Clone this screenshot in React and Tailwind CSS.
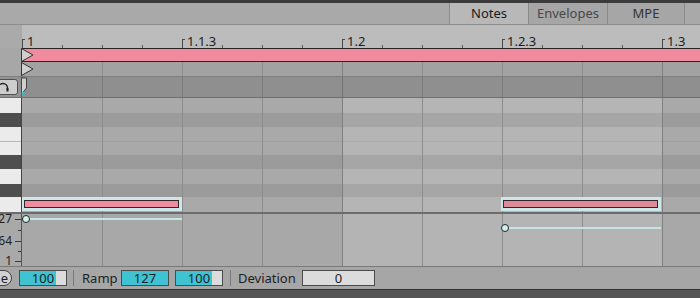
import React from "react";

const COLS = [0, 1, 2, 3, 4, 5, 6, 7, 8];
const isB = (i) => i >= 4 && i <= 7;
const colW = (i) => (i === 8 ? "flex-1" : "w-[80px] shrink-0");

const KEYS = [
  { t: "w", h: "h-[15px]" },
  { t: "b", h: "h-[14px]" },
  { t: "w", h: "h-[14px]" },
  { t: "w2", h: "h-[14px]" },
  { t: "b", h: "h-[14px]" },
  { t: "w", h: "h-[15px]" },
  { t: "b", h: "h-[13px]" },
  { t: "w", h: "h-[15px]" },
];

function lineCls(i, dark) {
  if (i === 0) return "";
  if (dark) return i === 4 || i === 8 ? "border-l border-[#727272]" : "border-l border-[#7c7c7c]";
  return i === 4 || i === 8 ? "border-l border-[#7f7f7f]" : "border-l border-[#8d8d8d]";
}

function cellCls(i, t) {
  const b = isB(i);
  if (t === "b") return b ? "bg-[#a6a6a6]" : "bg-[#9b9b9b]";
  if (t === "w2") return b ? "bg-[#b5b5b5] border-t border-[#acacac]" : "bg-[#a9a9a9] border-t border-[#a0a0a0]";
  return b ? "bg-[#b5b5b5]" : "bg-[#a9a9a9]";
}

function keyCls(t) {
  if (t === "b") return "bg-[#4e4e4e]";
  if (t === "w2") return "bg-[#ebebeb] border-t border-[#b8b8b8]";
  return "bg-[#ebebeb]";
}

const RULER = Array.from({ length: 17 }, (_, k) => k);
const LABELS = { 0: "1", 4: "1.1.3", 8: "1.2", 12: "1.2.3", 16: "1.3" };

function Ruler() {
  return (
    <div className="h-[23px] shrink-0 flex bg-[#bcbcbc]">
      <div className="w-[22px] shrink-0 bg-[#aaaaaa]" />
      <div className="flex-1 flex">
        {RULER.map((k) => (
          <div key={k} className="w-[40px] shrink-0 h-full flex items-end">
            {LABELS[k] !== undefined ? (
              <>
                <div className="w-[3px] h-[9px] border-l border-t border-[#4a4a4a] shrink-0" />
                <span className="ml-[2px] mb-[-1px] text-[13px] leading-[16px] text-[#1e1e1e] whitespace-nowrap">
                  {LABELS[k]}
                </span>
              </>
            ) : (
              <div className="w-[1px] h-[3px] bg-[#5a5a5a]" />
            )}
          </div>
        ))}
      </div>
    </div>
  );
}

function FlatCols({ bgCls, dark }) {
  return (
    <div className={"flex-1 flex " + bgCls}>
      {COLS.map((i) => (
        <div key={i} className={colW(i) + " h-full " + lineCls(i, dark)} />
      ))}
    </div>
  );
}

function Note({ leftCls, innerCls }) {
  return (
    <div className={"absolute top-[99px] w-[160px] h-[14px] bg-[#cbe7e9] pt-[3px] pb-[3px] pl-[2px] pr-[3px] " + leftCls}>
      <div className={"w-full h-full border border-[#3a2228] " + innerCls} />
    </div>
  );
}

function PianoRoll() {
  return (
    <div className="h-[114px] shrink-0 flex">
      <div className="w-[22px] shrink-0 flex flex-col border-r border-[#444444]">
        {KEYS.map((k, r) => (
          <div key={r} className={k.h + " " + keyCls(k.t)} />
        ))}
      </div>
      <div className="flex-1 relative flex">
        {COLS.map((i) => (
          <div key={i} className={colW(i) + " h-full flex flex-col " + lineCls(i, false)}>
            {KEYS.map((k, r) => (
              <div key={r} className={k.h + " " + cellCls(i, k.t)} />
            ))}
          </div>
        ))}
        <Note leftCls="left-[0px]" innerCls="bg-[#f08c9e]" />
        <Note leftCls="left-[479px]" innerCls="bg-[#de8b99]" />
      </div>
    </div>
  );
}

function VelocityLane() {
  return (
    <div className="h-[52px] shrink-0 flex">
      <div className="w-[22px] shrink-0 relative bg-[#a9a9a9] border-r border-[#555555] text-[12px] leading-[14px] text-[#1e1e1e]">
        <div className="absolute right-[9px] top-[-2px] whitespace-nowrap">127</div>
        <div className="absolute right-[9px] top-[20px] whitespace-nowrap">64</div>
        <div className="absolute right-[9px] top-[40px] whitespace-nowrap">1</div>
        <svg className="absolute right-0 top-0" width="7" height="52" viewBox="0 0 7 52">
          <g stroke="#3a3a3a" strokeWidth="1">
            <line x1="1" y1="5.5" x2="7" y2="5.5" />
            <line x1="4" y1="16.5" x2="7" y2="16.5" />
            <line x1="1" y1="27.5" x2="7" y2="27.5" />
            <line x1="4" y1="37.5" x2="7" y2="37.5" />
            <line x1="1" y1="47.5" x2="7" y2="47.5" />
          </g>
        </svg>
      </div>
      <div className="flex-1 relative flex">
        {COLS.map((i) => (
          <div
            key={i}
            className={colW(i) + " h-full " + lineCls(i, false) + " " + (isB(i) ? "bg-[#b4b4b4]" : "bg-[#a8a8a8]")}
          />
        ))}
        <div className="absolute left-[4px] top-[4px] w-[156px] h-[2px] bg-[#c6e4e6]" />
        <div className="absolute left-[0px] top-[1px] w-[8px] h-[8px] rounded-full border-[1.5px] border-[#1c2626] bg-[#d6eff1]" />
        <div className="absolute left-[483px] top-[13px] w-[156px] h-[2px] bg-[#c6e4e6]" />
        <div className="absolute left-[479px] top-[10px] w-[8px] h-[8px] rounded-full border-[1.5px] border-[#1c2626] bg-[#d6eff1]" />
      </div>
    </div>
  );
}

function ValueBox({ widthCls, fillCls, value }) {
  return (
    <div className={"relative h-[16px] border border-[#4b4b4b] bg-[#dcdcdc] flex items-center justify-center shrink-0 " + widthCls}>
      {fillCls ? <div className={"absolute left-0 top-0 bottom-0 bg-[#3fc2d1] " + fillCls} /> : null}
      <span className="relative text-[13px] leading-[14px] text-[#1e1e1e]">{value}</span>
    </div>
  );
}

function BottomBar() {
  return (
    <div className="h-[23px] shrink-0 flex items-center bg-[#a6a6a6] border-t border-[#7a7a7a] text-[13px] text-[#1e1e1e]">
      <div className="ml-[-28px] w-[40px] h-[16px] shrink-0 rounded-full border border-[#444444] bg-[#d2d2d2] flex items-center justify-end pr-[3px] leading-[14px]">
        e
      </div>
      <div className="ml-[7px]">
        <ValueBox widthCls="w-[48px]" fillCls="w-[36px]" value="100" />
      </div>
      <div className="ml-[6px] w-px h-[16px] bg-[#7a7a7a] shrink-0" />
      <div className="ml-[8px] w-[34px] shrink-0 leading-[14px] whitespace-nowrap">Ramp</div>
      <div className="ml-[5px]">
        <ValueBox widthCls="w-[48px]" fillCls="w-[46px]" value="127" />
      </div>
      <div className="ml-[6px]">
        <ValueBox widthCls="w-[48px]" fillCls="w-[36px]" value="100" />
      </div>
      <div className="ml-[7px] w-px h-[16px] bg-[#7a7a7a] shrink-0" />
      <div className="ml-[7px] w-[58px] shrink-0 leading-[14px] whitespace-nowrap">Deviation</div>
      <div className="ml-[6px]">
        <ValueBox widthCls="w-[73px]" fillCls="" value="0" />
      </div>
    </div>
  );
}

export default function App() {
  return (
    <div className="w-[700px] h-[298px] overflow-hidden flex flex-col bg-[#a8a8a8] font-['Noto_Sans',sans-serif] text-[#1e1e1e] select-none">
      <div className="h-[3px] shrink-0 bg-[#3b3b3b]" />
      <div className="h-[22px] shrink-0 flex bg-[#a9a9a9] border-b border-[#8c8c8c] text-[13px]">
        <div className="ml-[449px] flex h-full">
          <div className="w-[79px] h-full flex items-center justify-center bg-[#b8b8b8] border-l border-[#8a8a8a] text-[#1a1a1a]">
            Notes
          </div>
          <div className="w-[79px] h-full flex items-center justify-center bg-[#a6a6a6] border-l border-[#8a8a8a] text-[#474747]">
            Envelopes
          </div>
          <div className="w-[78px] h-full flex items-center justify-center bg-[#a6a6a6] border-l border-r border-[#8a8a8a] text-[#333333]">
            MPE
          </div>
        </div>
      </div>
      <Ruler />
      <div className="relative shrink-0 flex flex-col">
        <div className="h-[14px] flex">
          <div className="w-[22px] shrink-0 bg-[#a7a7a7] border-r border-[#555555]" />
          <div className="flex-1 bg-[#f08b9d] border-t border-b border-[#2d2326]" />
        </div>
        <div className="h-[15px] flex border-b border-[#7e7e7e]">
          <div className="w-[22px] shrink-0 bg-[#a7a7a7] border-r border-[#555555]" />
          <FlatCols bgCls="bg-[#a2a2a2]" dark={false} />
        </div>
        <div className="h-[21px] flex border-b border-[#6f6f6f]">
          <div className="w-[22px] shrink-0 bg-[#939393] border-r border-[#555555] flex items-center">
            <div className="ml-[-5px] w-[23px] h-[16px] rounded-[3px] border border-[#505050] bg-[#cdcdcd] flex items-center pl-[1px]">
              <svg width="12" height="10" viewBox="0 0 12 10" fill="none">
                <path d="M1.5 8.5 V6 A4.5 4.5 0 0 1 10.5 6 V8.5" stroke="#222" strokeWidth="1.4" />
                <rect x="0.5" y="6" width="2" height="3.5" fill="#222" />
                <rect x="9.5" y="6" width="2" height="3.5" fill="#222" />
              </svg>
            </div>
          </div>
          <FlatCols bgCls="bg-[#8f8f8f]" dark={true} />
        </div>
        <svg className="absolute left-[21px] top-0" width="13" height="50" viewBox="0 0 13 50">
          <polygon points="0.5,0.5 12,7 0.5,13.5" fill="#cfcfcf" stroke="#333" strokeWidth="1" />
          <polygon points="0.5,14.5 12,21 0.5,27.5" fill="#cfcfcf" stroke="#333" strokeWidth="1" />
          <path d="M0.5 30 H5.5 V40 L1.5 45 H0.5 Z" fill="#cfcfcf" stroke="#444" strokeWidth="1" />
          <polygon points="0.5,44 4,44 1,48" fill="#38c4d0" />
        </svg>
      </div>
      <PianoRoll />
      <div className="h-[2px] shrink-0 bg-[#6c6c6c]" />
      <VelocityLane />
      <BottomBar />
      <div className="flex-1 bg-[#555555] border-t border-[#333333]" />
    </div>
  );
}
